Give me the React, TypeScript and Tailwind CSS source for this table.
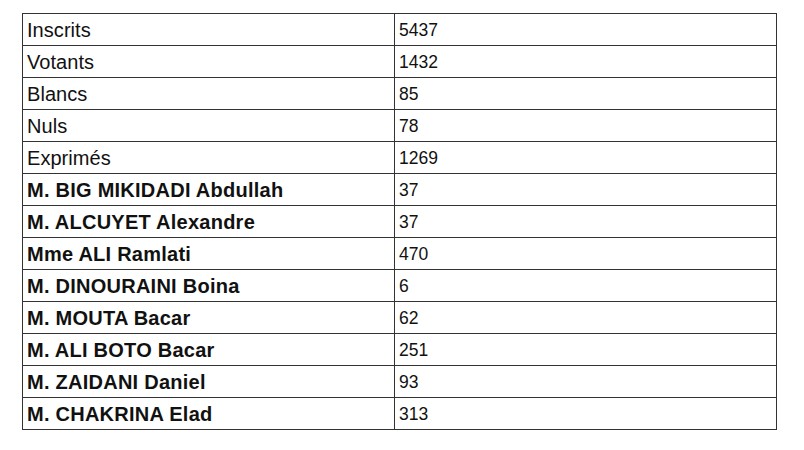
import React from "react";

const rows: { label: string; value: string; bold?: boolean }[] = [
  { label: "Inscrits", value: "5437" },
  { label: "Votants", value: "1432" },
  { label: "Blancs", value: "85" },
  { label: "Nuls", value: "78" },
  { label: "Exprimés", value: "1269" },
  { label: "M. BIG MIKIDADI Abdullah", value: "37", bold: true },
  { label: "M. ALCUYET Alexandre", value: "37", bold: true },
  { label: "Mme ALI Ramlati", value: "470", bold: true },
  { label: "M. DINOURAINI Boina", value: "6", bold: true },
  { label: "M. MOUTA Bacar", value: "62", bold: true },
  { label: "M. ALI BOTO Bacar", value: "251", bold: true },
  { label: "M. ZAIDANI Daniel", value: "93", bold: true },
  { label: "M. CHAKRINA Elad", value: "313", bold: true },
];

export default function App() {
  return (
    <div className="w-[804px] h-[450px] bg-white pt-[13px] pl-[22px] text-[#111]" style={{ fontFamily: '"Liberation Sans", Arial, sans-serif' }}>
      <div className="grid grid-cols-[372px_382px] w-[755px] border-l border-t border-[#333]">
        {rows.map((r) => (
          <React.Fragment key={r.label}>
            <div className={`h-[32px] border-r border-b border-[#333] pl-[4px] pt-[6px] text-[20px] leading-[20px] whitespace-nowrap ${r.bold ? "font-bold tracking-[0.25px]" : "font-normal tracking-[0.05px]"}`}>
              {r.label}
            </div>
            <div className="h-[32px] border-r border-b border-[#333] pl-[4px] pt-[8px] text-[17.5px] leading-[17px]">
              {r.value}
            </div>
          </React.Fragment>
        ))}
      </div>
    </div>
  );
}
